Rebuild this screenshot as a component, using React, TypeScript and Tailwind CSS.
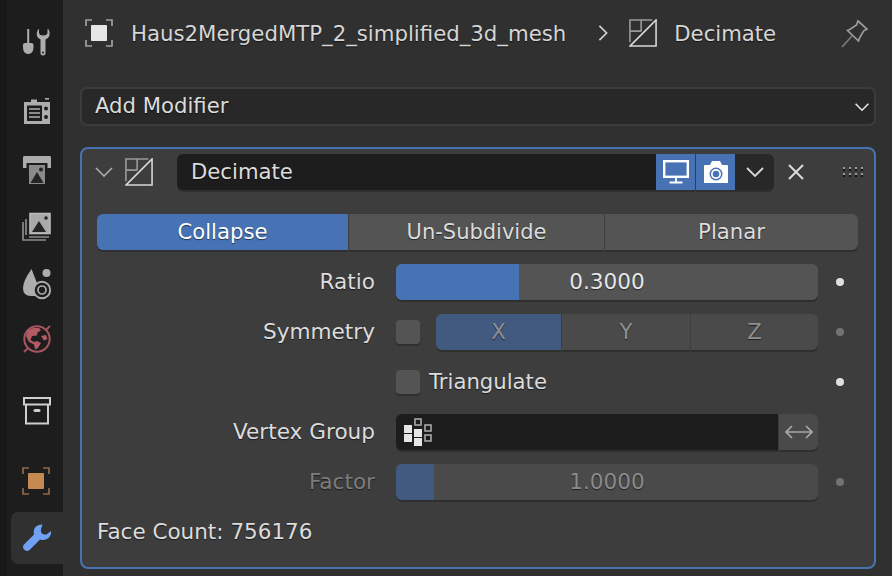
const S = "[text-shadow:0_1px_1px_rgba(0,0,0,0.55)]";

function DecimateIcon() {
  return (
    <svg width="28" height="28" viewBox="0 0 30 30" fill="none" stroke="#d6d6d6" strokeWidth="1.7">
      <path d="M1 29 L29 1 V29 Z" />
      <path d="M1 25 V1 H25 M1 13 H13 M13 1 V13" stroke="#9a9a9a" />
    </svg>
  );
}

function Chevron({ size = 20, color = "#cfcfcf", w = 1.8, rot = 0 }: { size?: number; color?: string; w?: number; rot?: number }) {
  return (
    <svg width={size} height={size} viewBox="0 0 20 20" fill="none" stroke={color} strokeWidth={w} style={{ transform: `rotate(${rot}deg)` }}>
      <path d="M2 6 L10 14 L18 6" />
    </svg>
  );
}

function ObjectFrame({ fill, frame }: { fill: string; frame: string }) {
  return (
    <svg width="28" height="28" viewBox="0 0 28 28" fill="none">
      <path d="M1 7 V1 H7 M21 1 H27 V7 M1 21 V27 H7 M21 27 H27 V21" stroke={frame} strokeWidth="1.7" />
      <rect x="6" y="6" width="16" height="16" rx="0.8" fill={fill} />
    </svg>
  );
}

function ToolIcon() {
  return (
    <svg width="30" height="30" viewBox="0 0 30 30" fill="#adadad">
      <rect x="5.2" y="1" width="2" height="14" />
      <path d="M1 17 Q1 15 3 15 H9.5 Q11.5 15 11.5 17 V19 Q11.5 26 6.2 26 Q1 26 1 19 Z" />
      <path d="M17 1 L16 1.5 Q14 5 15 8 Q16 10.5 18.5 11.5 V25 Q18.5 27.5 21 27.5 Q23.5 27.5 23.5 25 V11.5 Q26.5 10.5 27.5 7.5 Q28.5 4.5 26.5 1.2 L25.5 1 V5 Q25 7.5 21 7.5 Q17.5 7.5 17 5 Z" />
      <circle cx="21" cy="24.5" r="1" fill="#1d1d1d" />
    </svg>
  );
}

function RenderIcon() {
  return (
    <svg width="30" height="30" viewBox="0 0 30 30" fill="#adadad">
      <rect x="23" y="1" width="4" height="1.6" />
      <path fillRule="evenodd" d="M2 5 H9 V2.5 H15 V5 H28 V27 H2 Z M5 8.5 V24 H20 V8.5 Z" />
      <rect x="7" y="11" width="11" height="2" fill="#8a8a8a" />
      <rect x="7" y="15" width="11" height="2" fill="#8a8a8a" />
      <rect x="7" y="19" width="11" height="2" fill="#8a8a8a" />
      <circle cx="24" cy="11.5" r="2" fill="#1d1d1d" />
      <circle cx="24" cy="20" r="2" fill="#1d1d1d" />
    </svg>
  );
}

function OutputIcon() {
  return (
    <svg width="30" height="30" viewBox="0 0 30 30">
      <path d="M2 1 Q1 1 1 3 V13 H4.5 V8 H25.5 V13 H29 V3 Q29 1 28 1 Z" fill="#adadad" />
      <rect x="7" y="10" width="16" height="19" fill="#8a8a8a" />
      <path d="M8.5 28 L15 17 L21.5 28 Z" fill="#242424" />
      <circle cx="19" cy="14.5" r="2" fill="#242424" />
    </svg>
  );
}

function ViewLayerIcon() {
  return (
    <svg width="30" height="30" viewBox="0 0 30 30" fill="none">
      <path d="M4 7 V23 M1 10 V28 H24 M7 25 H27" stroke="#8a8a8a" strokeWidth="1.7" />
      <rect x="8" y="1.5" width="20" height="20" fill="#a9a9a9" stroke="#b8b8b8" strokeWidth="1.6" />
      <path d="M10 20 L17 9 L24 20 Z" fill="#242424" />
      <circle cx="24" cy="6" r="1.8" fill="#242424" />
    </svg>
  );
}

function SceneIcon() {
  return (
    <svg width="30" height="32" viewBox="0 0 30 32" fill="none">
      <path d="M9.5 1 Q1 13 1 20 Q1 28 9 28 H15 V15 Z" fill="#adadad" />
      <circle cx="24.5" cy="5" r="4" fill="#adadad" />
      <circle cx="20" cy="22" r="8.2" fill="#1d1d1d" stroke="#adadad" strokeWidth="1.9" />
      <circle cx="20" cy="22" r="4" fill="none" stroke="#adadad" strokeWidth="1.7" />
    </svg>
  );
}

function WorldIcon() {
  return (
    <svg width="30" height="30" viewBox="0 0 30 30" fill="none">
      <circle cx="15" cy="15" r="12.7" stroke="#a9555f" strokeWidth="2" />
      <path d="M2 28 L5.5 24.5 M24.5 5.5 L28 2" stroke="#a9555f" strokeWidth="1.8" />
      <path d="M6 6.5 L11 4 L17 4 L19 6.5 L15.5 8.5 L15 11.5 L10 12 L8.5 16 L12 18 L15 17 L19 19 L16 24 L13 25.5 L12 20.5 L7 18 L4 12 Z" fill="#b35a65" />
      <path d="M19 12 L24 11 L25.5 15 L22 16.5 Z" fill="#b35a65" />
    </svg>
  );
}

function CollectionIcon() {
  return (
    <svg width="30" height="30" viewBox="0 0 30 30" fill="none" stroke="#cfcfcf" strokeWidth="2">
      <rect x="2" y="2" width="26" height="6.5" />
      <path d="M4 8.5 V27.5 H26 V8.5" />
      <rect x="11.5" y="13" width="7" height="3" rx="1.5" fill="#cfcfcf" stroke="none" />
    </svg>
  );
}

function WrenchIcon() {
  return (
    <svg width="30" height="30" viewBox="0 0 30 30" fill="#71a1f5">
      <path d="M20.5 1.5 Q16 1 13.5 4 Q11 7 12 11.5 L2 21.5 Q0 24 2 26.5 Q4.5 29 7.5 27 L18 16.5 Q23 18 26.5 15 Q29.5 12 29 8 L24.5 11.5 Q21 12 19.5 10 Q18.5 8 19 6 Z" />
    </svg>
  );
}

function MonitorIcon() {
  return (
    <svg width="26" height="24" viewBox="0 0 26 24" fill="none" stroke="#fff">
      <rect x="1.2" y="1.2" width="23.6" height="15.6" strokeWidth="2.4" />
      <path d="M13 18 V22 M6.5 22.5 H19.5" strokeWidth="1.8" />
    </svg>
  );
}

function CameraIcon() {
  return (
    <svg width="26" height="24" viewBox="0 0 26 24">
      <path fillRule="evenodd" d="M1 6 Q1 5 2 5 H7 L9 1 H17 L19 5 H24 Q25 5 25 6 V23 H1 Z" fill="#fff" />
      <circle cx="13" cy="14" r="6.5" fill="#4772b3" />
      <circle cx="13" cy="14" r="5" fill="#fff" />
      <circle cx="13" cy="14" r="3.3" fill="#4772b3" />
    </svg>
  );
}

function PinIcon() {
  return (
    <svg width="28" height="29" viewBox="0 0 28 29" fill="none" stroke="#9c9c9c" strokeWidth="1.7">
      <path d="M17 2 L26 10 L22.5 12 L18.5 19 L17.5 22 L6.5 11.5 L9.5 10 L15.5 6 Z" />
      <path d="M11 17 L1 28" stroke="#7a7a7a" />
    </svg>
  );
}

function GripIcon() {
  return (
    <svg width="20" height="10" viewBox="0 0 20 10">
      {[0, 6, 12, 18].flatMap((x) =>
        [0, 6].flatMap((y) => [
          <rect key={`l${x}-${y}`} x={x} y={y} width="2" height="2" fill="#9a9a9a" />,
          <rect key={`d${x}-${y}`} x={x} y={y + 2} width="2" height="2" fill="#141414" />,
        ])
      )}
    </svg>
  );
}

function VGroupIcon() {
  return (
    <svg width="28" height="28" viewBox="0 0 28 28">
      <g fill="#e6e6e6">
        <rect x="0" y="7" width="8" height="8" />
        <rect x="0" y="16" width="8" height="8" />
        <rect x="10" y="11" width="8" height="8" />
        <rect x="10" y="20" width="8" height="8" />
      </g>
      <g fill="none" stroke="#a8a8a8" strokeWidth="1.6">
        <rect x="11" y="1" width="6" height="6" />
        <rect x="21" y="7" width="6" height="6" />
        <rect x="21" y="17" width="6" height="6" />
      </g>
    </svg>
  );
}

function SideCell({ children, cls }: { children: React.ReactNode; cls: string }) {
  return <div className={`flex items-center pl-[22px] ${cls}`}>{children}</div>;
}

function Sidebar() {
  return (
    <div className="flex w-[63px] shrink-0 bg-[#1d1d1d]">
      <div className="w-[7px] shrink-0 bg-[#181818]" />
      <div className="flex min-w-0 flex-1 flex-col">
        <div className="ml-[-7px]">
          <SideCell cls="h-[56px] pt-[30px]"><ToolIcon /></SideCell>
          <SideCell cls="h-[71px] pt-[41px]"><RenderIcon /></SideCell>
          <SideCell cls="h-[57px] pt-[29px]"><OutputIcon /></SideCell>
          <SideCell cls="h-[57px] pt-[28px]"><ViewLayerIcon /></SideCell>
          <SideCell cls="h-[57px] pt-[28px]"><SceneIcon /></SideCell>
          <SideCell cls="h-[55px] pt-[26px]"><WorldIcon /></SideCell>
          <SideCell cls="h-[73px] pt-[42px]"><CollectionIcon /></SideCell>
          <SideCell cls="h-[86px] pt-[24px]"><ObjectFrame fill="#c48a52" frame="#8a6a4c" /></SideCell>
        </div>
        <div className="ml-[4px] flex h-[52px] items-center rounded-l-[7px] bg-[#303030] pl-[11px] pr-[4px]">
          <WrenchIcon />
        </div>
      </div>
    </div>
  );
}

function Row({ label, dim, children, dot }: { label?: string; dim?: boolean; children: React.ReactNode; dot?: "on" | "dim" }) {
  return (
    <div className="flex h-9 items-center">
      <div className={`w-[278px] shrink-0 text-right text-[21.6px] ${dim ? "text-[#7d7d7d]" : "text-[#dcdcdc]"} ${S}`}>{label}</div>
      <div className="ml-[21px] h-9 w-[422px] shrink-0">{children}</div>
      <div className="flex w-[44px] shrink-0 justify-center">
        {dot && <div className={`size-2 rounded-full ${dot === "on" ? "bg-[#e0e0e0]" : "bg-[#727272]"}`} />}
      </div>
    </div>
  );
}

function Checkbox() {
  return <div className="size-6 rounded-[4px] bg-[#545454] shadow-[0_2px_0_#2f2f2f]" />;
}

export default function App() {
  return (
    <div
      className="flex h-[576px] w-[892px] overflow-hidden bg-[#303030] text-[21.2px] leading-none text-[#dcdcdc]"
      style={{ fontFamily: '"DejaVu Sans", sans-serif' }}
    >
      <Sidebar />
      <div className="min-w-0 flex-1 pl-[17px] pr-[16px]">
        <div className="flex h-[66px] items-center pl-[5px]">
          <ObjectFrame fill="#e6e6e6" frame="#a0a0a0" />
          <span className={`ml-[18px] pt-[2px] text-[21.25px] text-[#d6d6d6] ${S}`}>Haus2MergedMTP_2_simplified_3d_mesh</span>
          <span className="ml-[28px] flex"><Chevron size={18} rot={-90} w={1.9} /></span>
          <span className="ml-[17px] flex"><DecimateIcon /></span>
          <span className={`ml-[17px] pt-[2px] text-[#d6d6d6] ${S}`}>Decimate</span>
          <span className="ml-auto mr-[7px] flex"><PinIcon /></span>
        </div>
        <div className={`mt-[21px] flex h-[39px] items-center justify-between rounded-[7px] border-2 border-[#3c3c3c] bg-[#282828] pl-[13px] pr-[4px] ${S}`}>
          <span className="pb-[2px] text-[#dcdcdc]">Add Modifier</span>
          <Chevron size={16} color="#e6e6e6" w={2} />
        </div>
        <div className="mt-[21px] h-[422px] rounded-[8px] border-2 border-[#4772b3] bg-[#3d3d3d] px-[15px]">
          <div className="flex h-[43px] items-center pt-[3px]">
            <span className="ml-[-3px] flex"><Chevron size={20} color="#a8a8a8" w={1.7} /></span>
            <span className="ml-[11px] flex"><DecimateIcon /></span>
            <div className={`ml-[24px] flex h-9 w-[479px] shrink-0 items-center rounded-l-[6px] bg-[#1d1d1d] pl-[14px] shadow-[0_2px_0_#2f2f2f] ${S}`}>
              Decimate
            </div>
            <div className="flex h-9 w-[39px] shrink-0 items-center justify-center bg-[#4772b3] shadow-[0_2px_0_#2f2f2f]"><MonitorIcon /></div>
            <div className="ml-px flex h-9 w-[39px] shrink-0 items-center justify-center bg-[#4772b3] shadow-[0_2px_0_#2f2f2f]"><CameraIcon /></div>
            <div className="flex h-9 w-[39px] shrink-0 items-center justify-center rounded-r-[6px] bg-[#282828] shadow-[0_2px_0_#2f2f2f]"><Chevron size={20} color="#d8d8d8" w={1.8} /></div>
            <svg className="ml-[13px] shrink-0" width="18" height="18" viewBox="0 0 18 18" fill="none" stroke="#dcdcdc" strokeWidth="2"><path d="M2 2 L16 16 M16 2 L2 16" /></svg>
            <span className="ml-[38px] flex shrink-0"><GripIcon /></span>
          </div>
          <div className={`mt-[22px] flex h-9 gap-px ${S}`}>
            <div className="flex w-[251px] items-center justify-center rounded-l-[6px] bg-[#4772b3] text-white shadow-[0_2px_0_#2f2f2f]">Collapse</div>
            <div className="flex w-[255px] items-center justify-center bg-[#545454] text-[21px] shadow-[0_2px_0_#2f2f2f]">Un-Subdivide</div>
            <div className="flex w-[253px] items-center justify-center rounded-r-[6px] bg-[#545454] shadow-[0_2px_0_#2f2f2f]">Planar</div>
          </div>
          <div className="mt-[14px] flex flex-col gap-[14px]">
            <Row label="Ratio" dot="on">
              <div className={`relative flex h-9 overflow-hidden rounded-[6px] bg-[#545454] text-[21.6px] shadow-[0_2px_0_#2f2f2f] ${S}`}>
                <div className="w-[123px] bg-[#4772b3]" />
                <div className="absolute inset-0 flex items-center justify-center text-[#e6e6e6]">0.3000</div>
              </div>
            </Row>
            <Row label="Symmetry" dot="dim">
              <div className="flex h-9 items-center">
                <Checkbox />
                <div className={`ml-4 flex h-9 flex-1 gap-px text-[#8f8f8f] ${S}`}>
                  <div className="flex w-[125px] items-center justify-center rounded-l-[6px] bg-[#425a80] shadow-[0_2px_0_#2f2f2f]">X</div>
                  <div className="flex w-[128px] items-center justify-center bg-[#4a4a4a] shadow-[0_2px_0_#2f2f2f]">Y</div>
                  <div className="flex flex-1 items-center justify-center rounded-r-[6px] bg-[#4a4a4a] shadow-[0_2px_0_#2f2f2f]">Z</div>
                </div>
              </div>
            </Row>
            <Row dot="on">
              <div className="flex h-9 items-center">
                <Checkbox />
                <span className={`ml-[9px] ${S}`}>Triangulate</span>
              </div>
            </Row>
            <Row label="Vertex Group">
              <div className="flex h-9 gap-px">
                <div className="flex w-[382px] items-center rounded-l-[6px] bg-[#1d1d1d] pl-2 shadow-[0_2px_0_#2f2f2f]"><VGroupIcon /></div>
                <div className="flex flex-1 items-center justify-center rounded-r-[6px] bg-[#4a4a4a] shadow-[0_2px_0_#2f2f2f]">
                  <svg width="28" height="16" viewBox="0 0 28 16" fill="none" stroke="#a8a8a8" strokeWidth="1.7"><path d="M1 8 H27 M7 2 L1 8 L7 14 M21 2 L27 8 L21 14" /></svg>
                </div>
              </div>
            </Row>
            <Row label="Factor" dim dot="dim">
              <div className={`relative flex h-9 overflow-hidden rounded-[6px] bg-[#4a4a4a] text-[21.6px] shadow-[0_2px_0_#2f2f2f] ${S}`}>
                <div className="w-[38px] bg-[#425a80]" />
                <div className="absolute inset-0 flex items-center justify-center text-[#8a8a8a]">1.0000</div>
              </div>
            </Row>
          </div>
          <div className={`mt-[21px] text-[21.5px] text-[#dcdcdc] ${S}`}>Face Count: 756176</div>
        </div>
      </div>
    </div>
  );
}
